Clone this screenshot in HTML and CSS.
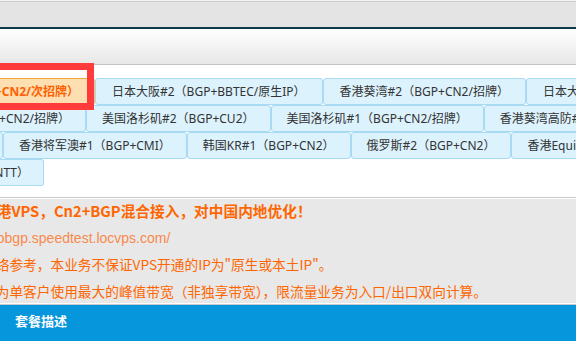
FILE: index.html
```html
<!DOCTYPE html>
<html lang="zh-CN">
<head>
<meta charset="utf-8">
<title>套餐</title>
<link rel="stylesheet" href="styles.css">
</head>
<body>
<div class="page">
  <div class="topbar"></div>
  <div class="navbar"></div>
  <div class="content">
    <div class="tabs">
      <div class="tab-row row-1">
        <a class="tab lead active"><span>香港葵湾#1（BGP+CN2/次招牌）</span></a>
        <a class="tab">日本大阪#2（BGP+BBTEC/原生IP）</a>
        <a class="tab">香港葵湾#2（BGP+CN2/招牌）</a>
        <a class="tab">日本大阪#1（BGP+BBTEC）</a>
      </div>
      <div class="tab-row row-2">
        <a class="tab lead"><span>香港将军澳#2（BGP+CN2/招牌）</span></a>
        <a class="tab">美国洛杉矶#2（BGP+CU2）</a>
        <a class="tab">美国洛杉矶#1（BGP+CN2/招牌）</a>
        <a class="tab">香港葵湾高防#1（BGP+CN2）</a>
      </div>
      <div class="tab-row row-3">
        <a class="tab lead"><span>俄罗斯#1（BGP+CN2）</span></a>
        <a class="tab">香港将军澳#1（BGP+CMI）</a>
        <a class="tab">韩国KR#1（BGP+CN2）</a>
        <a class="tab">俄罗斯#2（BGP+CN2）</a>
        <a class="tab">香港Equinix#1（BGP）</a>
      </div>
      <div class="tab-row row-4">
        <a class="tab lead"><span>日本东京#1（NTT）</span></a>
      </div>
    </div>
    <div class="notice">
      <p class="headline">香港VPS，Cn2+BGP混合接入，对中国内地优化！</p>
      <p class="url">hkobgp.speedtest.locvps.com/</p>
      <p class="note">网络参考，本业务不保证VPS开通的IP为"原生或本土IP"。</p>
      <p class="note">均为单客户使用最大的峰值带宽（非独享带宽），限流量业务为入口/出口双向计算。</p>
    </div>
  </div>
  <div class="section-title">套餐描述</div>
  <div class="highlight"></div>
</div>
</body>
</html>
```

FILE: styles.css
```css
html, body {
  margin: 0;
  padding: 0;
  background: #ffffff;
  overflow: hidden;
}

.page {
  position: relative;
  width: 576px;
  height: 341px;
  overflow: hidden;
  background: #f2f2f2;
  font-family: "Noto Sans", "Noto Sans CJK SC", sans-serif;
}

.topbar {
  margin-top: 1px;
  height: 25px;
  border-top: 1px solid #cdcdcd;
  background: #e4e4e4;
}

.navbar {
  height: 35px;
  border-top: 2px solid #0f3b49;
  border-bottom: 1px solid #c4c4c4;
  background: linear-gradient(#ffffff, #e7e7e7);
  box-shadow: 0 1px 0 #e2e2e2;
}

.content {
  background: #ffffff;
  padding-top: 13px;
}

.tabs {
  display: flex;
  flex-direction: column;
}

.tab-row {
  display: flex;
  overflow: hidden;
  white-space: nowrap;
}

.tab {
  flex: none;
  box-sizing: border-box;
  height: 27px;
  padding: 1px 15px 0;
  line-height: 24px;
  font-size: 12px;
  color: #333333;
  background: #dcf2fd;
  border: 1px solid #a9daf4;
  border-radius: 3px;
  text-decoration: none;
}

.row-1 .tab:not(.lead) {
  padding: 1px 16px 0;
}

.tab.lead {
  display: flex;
  justify-content: flex-end;
  overflow: hidden;
  border-left: none;
  border-radius: 0 3px 3px 0;
}

.tab.lead span {
  flex: none;
}

.row-1 .lead { width: 95px; }
.row-2 .lead { width: 86px; }
.row-3 .lead { width: 3px; padding: 0; }
.row-4 .lead { width: 44px; padding-right: 14px; }

.tab.active {
  background: #fedfb1;
  border-color: #f6c27a;
  border-top-color: #f5a83a;
  color: #ff6000;
  font-weight: bold;
}

.notice {
  margin-top: 11px;
  margin-left: -18px;
  background: #e8e8e8;
  border-top: 1px solid #c9c9c9;
  border-bottom: 1px solid #c9c9c9;
  box-shadow: inset 0 1px 0 #ffffff, inset 0 -1px 0 #ffffff;
  color: #ff6600;
  white-space: nowrap;
}

.notice p {
  margin: 0;
  line-height: 26.5px;
}

.headline {
  font-family: "Noto Sans CJK SC", sans-serif;
  font-size: 14.7px;
  font-weight: bold;
}

.url {
  font-family: "Liberation Sans", Arial, sans-serif;
  font-size: 14px;
  color: #f9884c;
}

.note {
  font-family: "Noto Sans CJK SC", sans-serif;
  font-size: 13.7px;
}

.section-title {
  height: 40px;
  padding-left: 15px;
  line-height: 32px;
  background: #0596dc;
  color: #ffffff;
  font-family: "Noto Sans CJK SC", sans-serif;
  font-size: 13px;
  font-weight: bold;
}

.highlight {
  position: absolute;
  left: -10px;
  top: 63px;
  width: 104px;
  height: 47px;
  box-sizing: border-box;
  border: 7px solid #ff3b3b;
}
```
